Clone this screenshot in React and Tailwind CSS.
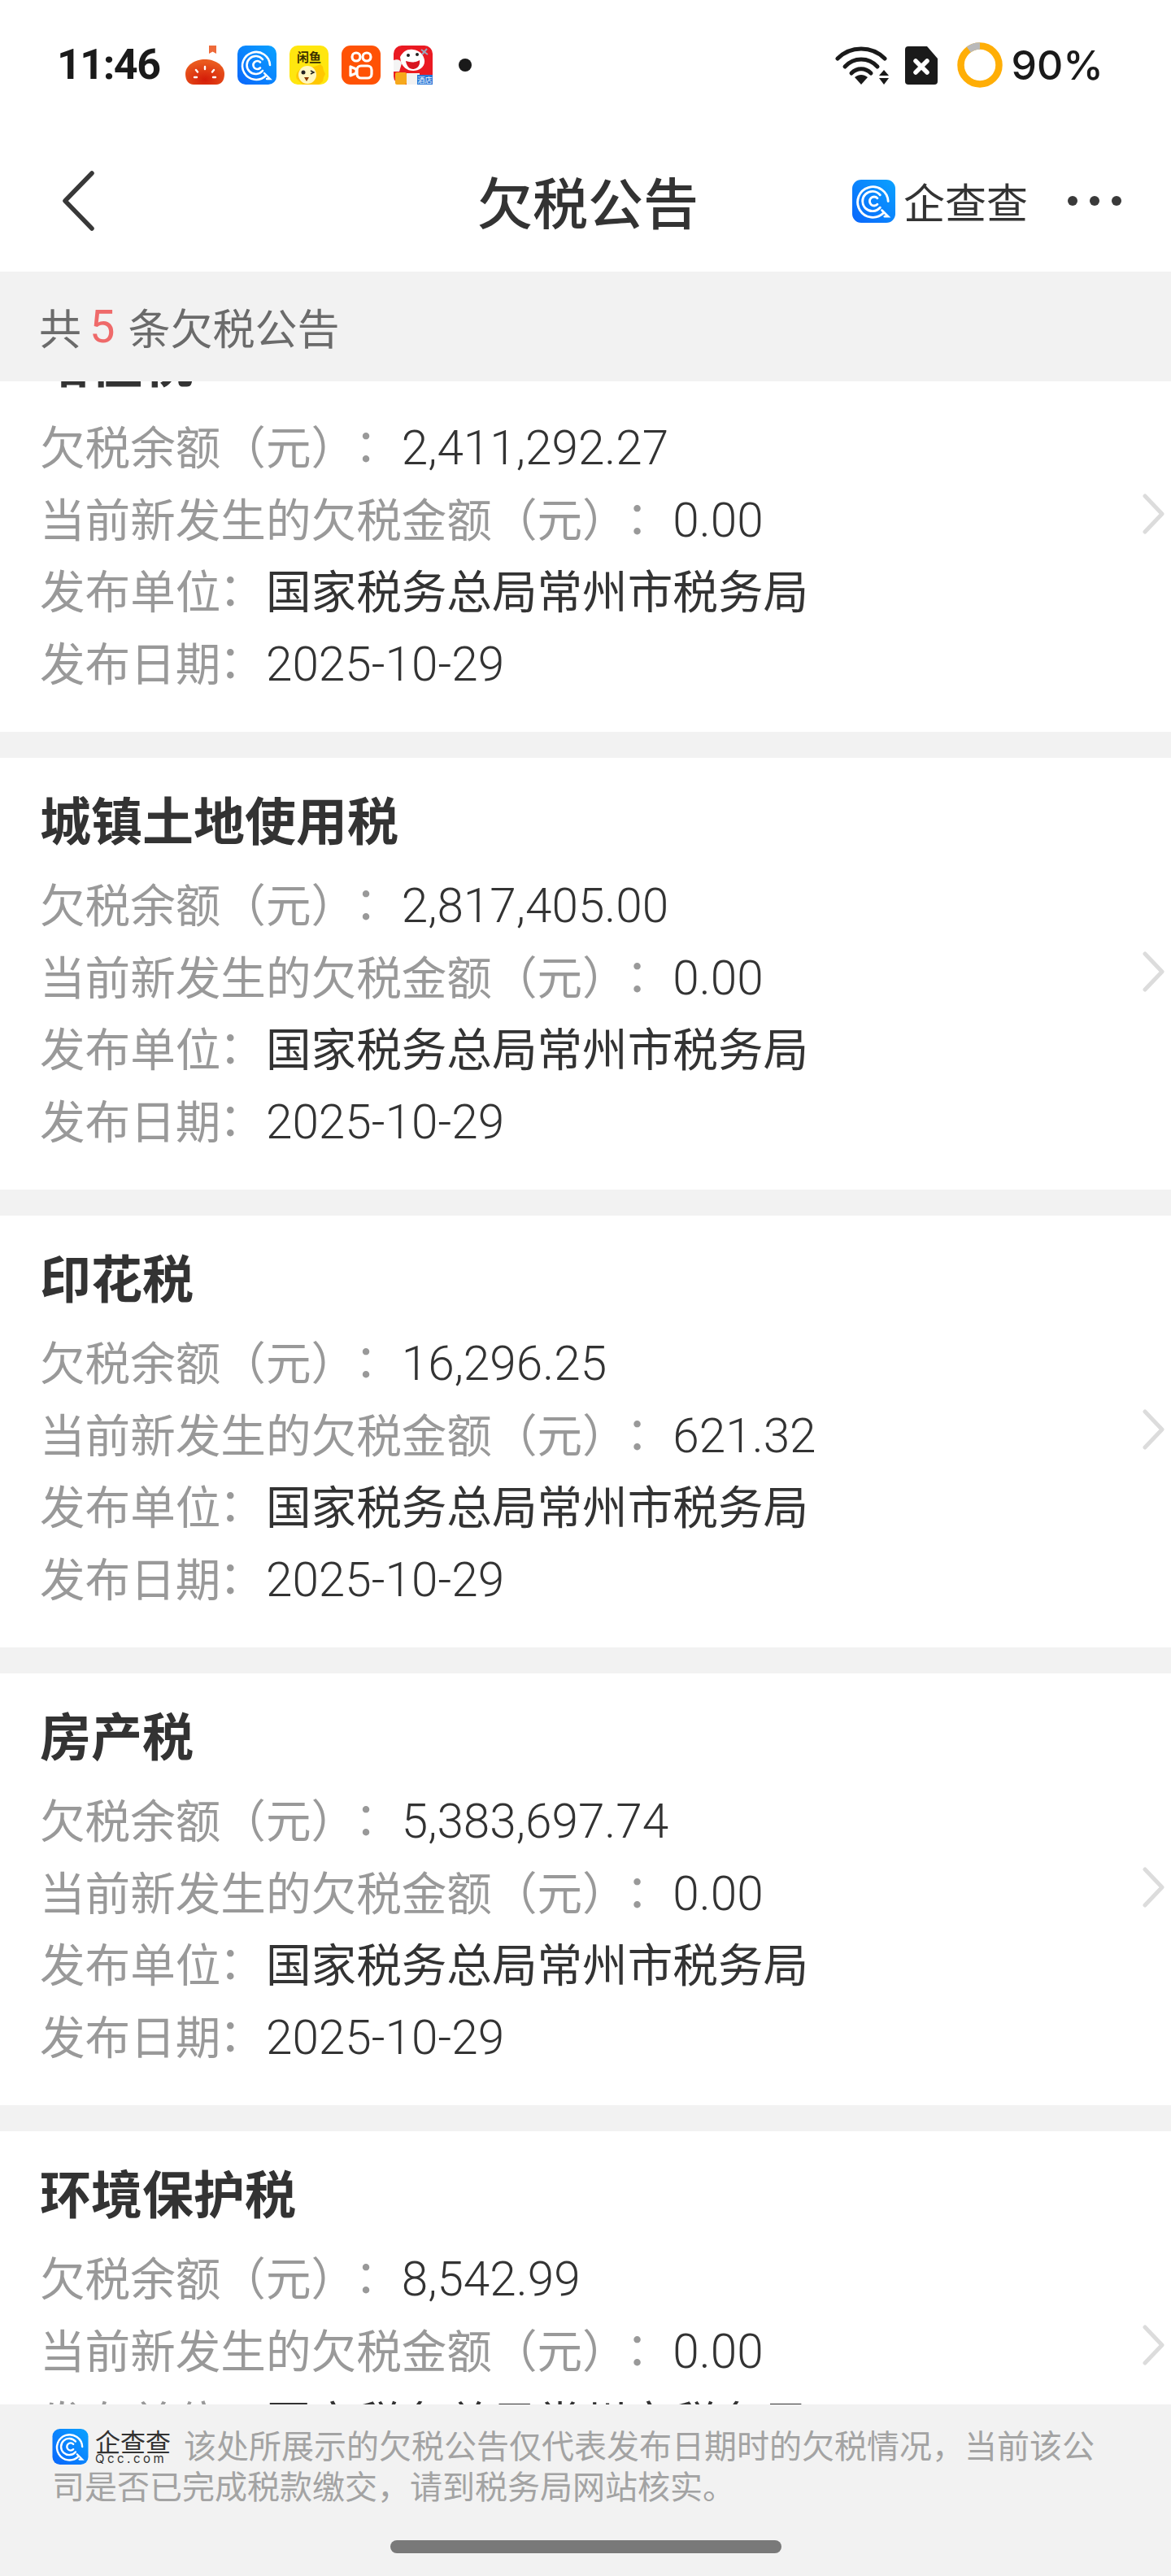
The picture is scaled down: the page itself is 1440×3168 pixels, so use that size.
const CJK = "font-['Noto_Sans_CJK_SC',sans-serif]";

const records = [
  { title: '增值税', balance: '2,411,292.27', fresh: '0.00' },
  { title: '城镇土地使用税', balance: '2,817,405.00', fresh: '0.00' },
  { title: '印花税', balance: '16,296.25', fresh: '621.32' },
  { title: '房产税', balance: '5,383,697.74', fresh: '0.00' },
  { title: '环境保护税', balance: '8,542.99', fresh: '0.00' },
];

const QccIcon = ({ className, id }) => (
  <svg viewBox="0 0 48 48" className={className}>
    <defs>
      <linearGradient id={id} x1="0" y1="1" x2="1" y2="0">
        <stop offset="0" stopColor="#0a66fb" />
        <stop offset="1" stopColor="#0aa2ff" />
      </linearGradient>
    </defs>
    <rect width="48" height="48" rx="10" fill={`url(#${id})`} />
    <g fill="none" stroke="#fff" strokeLinecap="round">
      <path d="M35 37a17 17 0 1 1 5-13" strokeWidth="2.6" />
      <path d="M31 17a11 11 0 1 0 0 14" strokeWidth="2.6" />
      <path d="M28 20.5a5 5 0 1 0 0 7" strokeWidth="2.6" />
      <path d="M33 34l7 7h-4" strokeWidth="2.4" />
    </g>
  </svg>
);

const TomatoIcon = () => (
  <svg viewBox="0 0 48 48" className="w-12 h-12">
    <defs>
      <radialGradient id="tomato" cx="0.5" cy="0.8" r="0.7">
        <stop offset="0" stopColor="#d41c08" />
        <stop offset="1" stopColor="#ea5a1e" />
      </radialGradient>
    </defs>
    <path d="M29 0h9v10l-4.500-2.500L29 10z" fill="#ee6a3a" />
    <path d="M24 17c12 0 24 7 24 18 0 8-4 13-10 13H10C4 48 0 43 0 35c0-11 12-18 24-18z" fill="url(#tomato)" />
    <g stroke="#fff" strokeWidth="2.400" strokeLinecap="round">
      <path d="M24 26v3M13 30l2 2.500M35 30l-2 2.500M11 39h3M34 39h3" />
    </g>
  </svg>
);

const XianyuIcon = () => (
  <svg viewBox="0 0 48 48" className="w-12 h-12">
    <rect width="48" height="48" rx="10" fill="#ffe60f" />
    <text x="24" y="20" textAnchor="middle" fontSize="15" fontWeight="700" fill="#3a3000" fontFamily="Noto Sans CJK SC">闲鱼</text>
    <path d="M38 23l3 3 1 5 2 4-2 4-1 5-5 4H16l-7-7c-3-6 3-14 11-14 6 0 10 0 18-4z" fill="#ffc800" />
    <circle cx="22" cy="36" r="11" fill="#fff7c0" />
    <circle cx="17" cy="33" r="2.500" fill="#222" />
    <path d="M26 31l4 2-4 2" fill="none" stroke="#222" strokeWidth="1.400" />
    <path d="M18 39h6l-3 5z" fill="#8a3a00" />
  </svg>
);

const KuaishouIcon = () => (
  <svg viewBox="0 0 48 48" className="w-12 h-12">
    <rect width="48" height="48" rx="11" fill="#ff5205" />
    <g fill="none" stroke="#fff" strokeWidth="3.200">
      <circle cx="18" cy="14" r="5" />
      <circle cx="31" cy="14" r="5" />
      <rect x="19" y="25" width="18" height="15" rx="5" />
      <path d="M18 29l-7-3v11l7-3z" strokeLinejoin="round" />
    </g>
  </svg>
);

const JdIcon = () => (
  <svg viewBox="0 0 48 48" className="w-12 h-12">
    <rect width="48" height="48" rx="10" fill="#ea1a22" />
    <path d="M8 14c4-7 9-10 16-9 8 1 13 6 14 13 1 8-6 13-14 13S11 26 9 20z" fill="#fff" />
    <path d="M0 18c5-2 9 0 10 4l-3 10H0z" fill="#f4f4f4" />
    <path d="M15 19c6 2 12 2 17-1 1 7-3 11-8 11s-8-4-9-10z" fill="#d81520" />
    <circle cx="18" cy="12" r="2" fill="#222" />
    <circle cx="29" cy="11" r="2" fill="#222" />
    <path d="M34 5l8 6M41 4l-6 7" stroke="#9aa7bb" strokeWidth="2" />
    <rect x="2" y="33" width="14" height="15" rx="2" fill="#f6a81c" />
    <path d="M16 34h16v14H16z" fill="#f2f2f2" />
    <rect x="29" y="36" width="19" height="12" fill="#2a78d8" />
    <text x="38.500" y="46" textAnchor="middle" fontSize="9" fill="#fff" fontFamily="Noto Sans CJK SC">酒店</text>
  </svg>
);

const WifiIcon = () => (
  <svg viewBox="0 0 66 47" className="w-[66px] h-[47px]">
    <g fill="none" stroke="#1a1a1a" strokeWidth="5" strokeLinecap="round">
      <path d="M3 15C19 -1 45 -1 61 15" />
      <path d="M12 25C23 13 41 13 52 25" />
      <path d="M20 33C27 26 37 26 44 33" />
    </g>
    <path d="M24 38c5-4 11-4 16 0l-8 9z" fill="#1a1a1a" />
    <path d="M60 29l6 7H54zM54 39h12l-6 8z" fill="#1a1a1a" />
  </svg>
);

const SimIcon = () => (
  <svg viewBox="0 0 40 47" className="w-10 h-[47px]">
    <path d="M4 0h23l13 15v28a4 4 0 0 1-4 4H4a4 4 0 0 1-4-4V4a4 4 0 0 1 4-4z" fill="#1a1a1a" />
    <path d="M13 18l14 14M27 18L13 32" stroke="#fff" strokeWidth="5.500" strokeLinecap="round" />
  </svg>
);

const BatteryRing = () => (
  <svg viewBox="0 0 56 56" className="w-14 h-14">
    <circle cx="28" cy="28" r="23.500" fill="none" stroke="#ffae06" strokeWidth="8.500" />
    <path d="M28 4.500A23.500 23.500 0 0 0 14.200 9" fill="none" stroke="#b9b9b9" strokeWidth="8.500" />
  </svg>
);

const StatusBar = () => (
  <div className="h-40 flex items-center justify-between pl-[70px] pr-[83px] bg-white">
    <div className="flex items-center">
      <span className="w-[158px] text-[52px] font-bold tracking-[-1.5px] leading-none text-[#1a1a1a] font-['Roboto',sans-serif]">11:46</span>
      <div className="flex items-center gap-4">
        <TomatoIcon />
        <QccIcon className="w-12 h-12" id="qcc-status" />
        <XianyuIcon />
        <KuaishouIcon />
        <JdIcon />
      </div>
      <span className="ml-8 w-4 h-4 rounded-full bg-[#1a1a1a]" />
    </div>
    <div className="flex items-center">
      <WifiIcon />
      <span className="w-5" />
      <SimIcon />
      <span className="w-6" />
      <BatteryRing />
      <span className="ml-[11px] text-[50px] font-medium leading-none text-[#1a1a1a] font-['Inter',sans-serif]">90%</span>
    </div>
  </div>
);

const Header = () => (
  <div className="h-[174px] flex items-center bg-white">
    <div className="flex-1 pl-[75px]">
      <svg viewBox="0 0 42 74" className="w-[42px] h-[74px]">
        <path d="M38 3L5 37l33 34" fill="none" stroke="#383838" strokeWidth="5.500" strokeLinecap="round" strokeLinejoin="round" />
      </svg>
    </div>
    <h1 className={`mr-2 text-[68px] font-medium leading-none text-[#333] ${CJK}`}>欠税公告</h1>
    <div className="flex-1 flex items-center justify-end pr-[61px]">
      <QccIcon className="w-[53px] h-[53px]" id="qcc-header" />
      <span className={`ml-[10px] text-[51px] leading-none text-[#333] ${CJK}`}>企查查</span>
      <div className="ml-[49px] flex items-center gap-[15px]">
        <span className="w-3 h-3 rounded-full bg-[#3a3a3a]" />
        <span className="w-3 h-3 rounded-full bg-[#3a3a3a]" />
        <span className="w-3 h-3 rounded-full bg-[#3a3a3a]" />
      </div>
    </div>
  </div>
);

const Row = ({ label, children }) => (
  <div className={`h-[88.5px] leading-[88.5px] text-[55.6px] whitespace-nowrap [text-spacing-trim:space-all] ${CJK}`}>
    <span className="text-[#999]">{label}</span>
    <span className="-ml-4 mr-4 text-[#999] font-['Noto_Sans_CJK_TC',sans-serif]">：</span>
    {children}
  </div>
);

const Num = ({ children }) => (
  <span className="text-[58.5px] text-[#333] font-light font-['Roboto',sans-serif]">{children}</span>
);

const RecordCard = ({ record }) => (
  <div className="flex items-center bg-white pl-[49px] pr-2 pt-[30px] pb-[43px]">
    <div className="flex-1">
      <h2 className={`h-[88px] mb-4 leading-[88px] text-[63px] font-bold text-[#333] ${CJK}`}>{record.title}</h2>
      <Row label="欠税余额（元）"><Num>{record.balance}</Num></Row>
      <Row label="当前新发生的欠税金额（元）"><Num>{record.fresh}</Num></Row>
      <Row label="发布单位"><span className="text-[#333]">国家税务总局常州市税务局</span></Row>
      <Row label="发布日期"><Num>2025-10-29</Num></Row>
    </div>
    <svg viewBox="0 0 27 50" className="mt-[7px] w-[27px] h-[50px]">
      <path d="M3 3l21 22L3 47" fill="none" stroke="#dcdcdc" strokeWidth="5" strokeLinecap="round" strokeLinejoin="round" />
    </svg>
  </div>
);

const Footer = () => (
  <div className="h-[211px] shrink-0 flex flex-col bg-[#f2f2f2] pl-16 pr-16">
    <p className={`mt-6 text-[40px] leading-[50px] text-[#a3a3a3] ${CJK}`}>
      <span className="inline-flex items-center align-[-8px] -my-3 mr-4">
        <QccIcon className="w-[45px] h-[44px]" id="qcc-footer" />
        <span className="ml-2 flex flex-col items-stretch">
          <span className="text-[31px] leading-[30px] text-[#333]">企查查</span>
          <span className="text-[15px] leading-[14px] tracking-[3.500px] text-[#333] font-['Inter',sans-serif]">Qcc.com</span>
        </span>
      </span>
      该处所展示的欠税公告仅代表发布日期时的欠税情况，当前该公司是否已完成税款缴交，请到税务局网站核实。
    </p>
    <div className="mt-auto mb-7 w-[481px] h-4 ml-[416px] rounded-full bg-[#797979]" />
  </div>
);

const App = () => {
  return (
    <div className="w-[1440px] h-[3168px] flex flex-col overflow-hidden bg-white">
      <StatusBar />
      <Header />
      <div className={`h-[135px] shrink-0 flex items-center pl-12 bg-[#f2f2f2] text-[52px] text-[#6b6b6b] ${CJK}`}>
        共<span className="ml-[10px] mr-4 text-[56px] text-[#ef6a6a] font-['Roboto',sans-serif]">5</span>条欠税公告
      </div>
      <div className="flex-1 min-h-0 overflow-hidden bg-[#f2f2f2]">
        <div className="-mt-[100px] flex flex-col gap-8">
          {records.map((record) => (
            <RecordCard key={record.title} record={record} />
          ))}
        </div>
      </div>
      <Footer />
    </div>
  );
};

export default App;
